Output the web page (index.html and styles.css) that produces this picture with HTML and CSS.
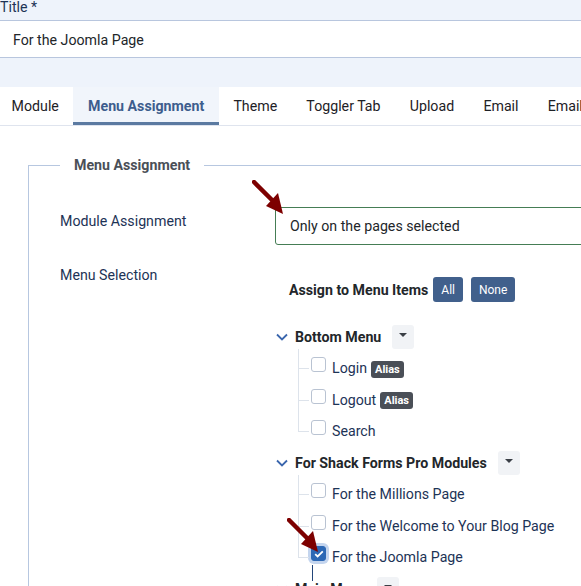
FILE: index.html
```html
<!DOCTYPE html>
<html>

<head lang="en">
	<meta charset="UTF-8">
	<title>Module - Menu Assignment</title>
	<link rel="stylesheet" href="styles.css">
</head>

<body>
	<div class="page">
		<div class="title-band">
			<label class="title-label">Title *</label>
		</div>
		<div class="title-input">For the Joomla Page</div>
		<div class="band"></div>

		<ul class="tabs">
			<li class="tab">Module</li>
			<li class="tab active">Menu Assignment</li>
			<li class="tab">Theme</li>
			<li class="tab">Toggler Tab</li>
			<li class="tab">Upload</li>
			<li class="tab">Email</li>
			<li class="tab">Email</li>
		</ul>

		<fieldset class="assign">
			<legend>Menu Assignment</legend>

			<div class="row row-assign">
				<div class="label">Module Assignment</div>
				<div class="field">
					<div class="select">Only on the pages selected</div>
				</div>
			</div>

			<div class="row">
				<div class="label">Menu Selection</div>
				<div class="field">
					<div class="assign-head">
						<span class="assign-title">Assign to Menu Items</span>
						<button class="btn">All</button>
						<button class="btn">None</button>
					</div>

					<div class="menu">
						<div class="menu-head">
							<svg class="chev" width="12" height="8" viewBox="0 0 12 8"><path d="M1 1.5l5 5 5-5" fill="none" stroke="#3a66ad" stroke-width="1.8"/></svg>
							<span class="menu-name">Bottom Menu</span>
							<span class="drop"><i></i></span>
						</div>
						<ul class="items">
							<li class="item"><span class="box"></span>Login <span class="badge">Alias</span></li>
							<li class="item"><span class="box"></span>Logout <span class="badge">Alias</span></li>
							<li class="item"><span class="box"></span>Search</li>
						</ul>
					</div>

					<div class="menu">
						<div class="menu-head">
							<svg class="chev" width="12" height="8" viewBox="0 0 12 8"><path d="M1 1.5l5 5 5-5" fill="none" stroke="#3a66ad" stroke-width="1.8"/></svg>
							<span class="menu-name">For Shack Forms Pro Modules</span>
							<span class="drop"><i></i></span>
						</div>
						<ul class="items">
							<li class="item"><span class="box"></span>For the Millions Page</li>
							<li class="item"><span class="box"></span>For the Welcome to Your Blog Page</li>
							<li class="item"><span class="box checked"><svg width="10" height="8" viewBox="0 0 10 8"><path d="M1.2 4.2l2.4 2.3 5.2-5.2" fill="none" stroke="#fff" stroke-width="1.8"/></svg></span>For the Joomla Page</li>
						</ul>
					</div>

					<div class="menu">
						<div class="menu-head">
							<svg class="chev" width="12" height="8" viewBox="0 0 12 8"><path d="M1 1.5l5 5 5-5" fill="none" stroke="#3a66ad" stroke-width="1.8"/></svg>
							<span class="menu-name">Main Menu</span>
							<span class="drop"><i></i></span>
						</div>
					</div>
				</div>
			</div>
		</fieldset>

		<span class="caret-line"></span>

		<svg class="arrow arrow-1" width="40" height="40" viewBox="0 0 40 40">
			<path d="M2 2 L22 22" stroke="#7d0000" stroke-width="4.5" stroke-linecap="round"/>
			<path d="M14 26 L26 13 L31 34 Z" fill="#7d0000"/>
		</svg>
		<svg class="arrow arrow-2" width="40" height="40" viewBox="0 0 40 40">
			<path d="M2 2 L22 22" stroke="#7d0000" stroke-width="4.5" stroke-linecap="round"/>
			<path d="M14 26 L26 13 L31 34 Z" fill="#7d0000"/>
		</svg>
	</div>
</body>

</html>
```

FILE: styles.css
```css
* {
	margin: 0;
	padding: 0;
	box-sizing: border-box;
}

body {
	background: #fff;
	overflow: hidden;
	font-family: Roboto, "Liberation Sans", sans-serif;
	font-size: 14.2px;
	color: #22262a;
}

.page {
	position: relative;
	width: 581px;
	height: 586px;
	overflow: hidden;
}

.title-band {
	height: 21px;
	background: #eef3fb;
}

.title-label {
	display: block;
	line-height: 16px;
	margin-top: -1px;
	color: #1d3356;
}

.title-input {
	height: 38px;
	margin-left: -1px;
	width: 700px;
	padding: 3px 0 0 14px;
	line-height: 33px;
	background: #fff;
	border-top: 1px solid #b8c6de;
	border-bottom: 1px solid #b8c6de;
	color: #22262a;
}

.band {
	height: 29px;
	background: #eef3fb;
}

.tabs {
	display: flex;
	list-style: none;
	margin-left: -3px;
	height: 39px;
	border-bottom: 1px solid #dfe4ee;
	white-space: nowrap;
}

.tab {
	padding: 3px 14.6px 0;
	line-height: 33px;
	border-bottom: 3px solid transparent;
	color: #1e2126;
}

.tab.active {
	background: #f1f5fb;
	border-bottom-color: #5b7aa1;
	color: #3d5d8d;
	font-weight: bold;
}

.assign {
	margin: 29px 0 0 28px;
	width: 700px;
	height: 600px;
	border: 0;
	border-left: 1px solid #b7c7e0;
	border-top: 1px solid #b7c7e0;
	padding: 0 0 0 31px;
}

.assign legend {
	padding: 0 14px;
	font-weight: bold;
	color: #4a4f57;
	line-height: 20px;
}

.row {
	display: grid;
	grid-template-columns: 215px 1fr;
}

.row-assign {
	margin-top: 32px;
	margin-bottom: 20px;
}

.label {
	color: #1d3356;
	line-height: 20px;
}

.row-assign .label {
	line-height: 28px;
}

.select {
	width: 420px;
	height: 38px;
	border: 1px solid #457d55;
	border-radius: 3px;
	padding-left: 14px;
	line-height: 36px;
	color: #22262a;
}

.assign-head {
	display: flex;
	align-items: center;
	gap: 8px;
	padding-left: 14px;
	margin-top: 12px;
}

.assign-title {
	font-weight: bold;
	color: #22262a;
	margin-right: -3px;
}

.btn {
	border: 0;
	border-radius: 3px;
	background: #41608c;
	color: #fff;
	font-family: Roboto, "Liberation Sans", sans-serif;
	font-size: 12px;
	height: 25px;
	padding: 0 8px;
}

.assign-head + .menu {
	margin-top: 19px;
}

.menu-head {
	display: flex;
	align-items: center;
	height: 31.5px;
}

.chev {
	margin: 0 7px 0 1px;
}

.menu-name {
	font-weight: bold;
	color: #22262a;
}

.drop {
	width: 22px;
	height: 24px;
	margin-left: 11px;
	border-radius: 3px;
	background: #f1f3f6;
	position: relative;
}

.drop i {
	position: absolute;
	left: 7px;
	top: 8px;
	border-left: 4px solid transparent;
	border-right: 4px solid transparent;
	border-top: 4px solid #3a3f46;
}

.items {
	list-style: none;
	margin-left: 23px;
	position: relative;
}

.items::before {
	content: "";
	position: absolute;
	left: 0;
	top: -4px;
	bottom: 15px;
	border-left: 1px solid #dde3eb;
}

.item {
	position: relative;
	display: flex;
	align-items: center;
	height: 31.5px;
	padding-left: 13px;
	color: #1d3356;
	white-space: nowrap;
}

.item::before {
	content: "";
	position: absolute;
	left: 0;
	top: 50%;
	width: 11px;
	border-top: 1px solid #dde3eb;
}

.box {
	width: 15px;
	height: 15px;
	border: 1px solid #b9c3d2;
	border-radius: 3px;
	margin-right: 6px;
	margin-top: -7px;
	background: #fff;
	display: flex;
	align-items: center;
	justify-content: center;
}

.box.checked {
	background: #2c68b5;
	border-color: #2c68b5;
	box-shadow: 0 0 0 3px #c4d5ee;
}

.badge {
	margin-left: 4px;
	padding: 0 4px;
	height: 17px;
	line-height: 17px;
	border-radius: 3px;
	background: #4a4f57;
	color: #fff;
	font-size: 11px;
	font-weight: bold;
	margin-top: 2px;
}

.caret-line {
	position: absolute;
	left: 312px;
	top: 565px;
	width: 1px;
	height: 16px;
	background: #23467a;
}

.arrow {
	position: absolute;
}

.arrow-1 {
	left: 252px;
	top: 180px;
}

.arrow-2 {
	left: 287px;
	top: 518px;
}
```
